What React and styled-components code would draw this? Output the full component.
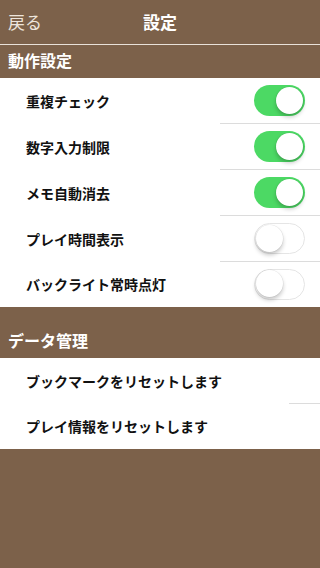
import styled, { createGlobalStyle } from "styled-components";

const GlobalStyle = createGlobalStyle`
  html, body {
    margin: 0;
    padding: 0;
    background: #7c614a;
  }

  body {
    font-family: "Noto Sans CJK JP", "Noto Sans", sans-serif;
  }
`;

const Page = styled.div`
  display: flex;
  flex-direction: column;
  width: 320px;
  min-height: 568px;
  background: #7c614a;
`;

const NavBar = styled.div`
  display: flex;
  align-items: center;
  justify-content: center;
  position: relative;
  height: 44px;
  border-bottom: 1.5px solid #e9e1d9;
`;

const BackButton = styled.div`
  position: absolute;
  top: 0;
  left: 8px;
  height: 42px;
  display: flex;
  align-items: center;
  color: #eee5dc;
  font-size: 17px;
`;

const Title = styled.div`
  margin-top: -2px;
  color: #ffffff;
  font-size: 17px;
  font-weight: bold;
`;

const SectionHeader = styled.div`
  display: flex;
  align-items: flex-end;
  height: ${({ height }) => height};
  padding: 0 8px 6px;
  box-sizing: border-box;
  color: #ffffff;
  font-size: 16px;
  font-weight: bold;
`;

const Group = styled.div`
  display: flex;
  flex-direction: column;
  background: #ffffff;
`;

const Row = styled.div`
  display: flex;
  align-items: center;
  justify-content: space-between;
  position: relative;
  height: ${({ last }) => (last ? "45px" : "46px")};
  padding: 0 15px 0 26px;
  box-sizing: border-box;

  &::after {
    content: "";
    display: ${({ last }) => (last ? "none" : "block")};
    position: absolute;
    left: ${({ inset }) => inset};
    right: 0;
    bottom: 0;
    height: 1px;
    background: #dcdcdc;
  }
`;

const Label = styled.div`
  color: #111111;
  font-size: 14px;
  font-weight: bold;
`;

const Track = styled.div`
  position: relative;
  width: 51px;
  height: 31px;
  border-radius: 16px;
  box-sizing: border-box;
  background: ${({ on }) => (on ? "#4cd964" : "#ffffff")};
  border: ${({ on }) => (on ? "none" : "1.5px solid #e5e5e5")};
`;

const Knob = styled.div`
  position: absolute;
  top: ${({ on }) => (on ? "2px" : "0.5px")};
  left: ${({ on }) => (on ? "22px" : "0.5px")};
  width: 27px;
  height: 27px;
  border-radius: 50%;
  background: #ffffff;
  box-shadow: 0 3px 4px rgba(0, 0, 0, 0.22), 0 0 0 0.5px rgba(0, 0, 0, 0.08);
`;

const Footer = styled.div`
  flex: 1;
`;

function Toggle({ on }) {
  return (
    <Track on={on}>
      <Knob on={on} />
    </Track>
  );
}

const behaviourSettings = [
  { label: "重複チェック", on: true },
  { label: "数字入力制限", on: true },
  { label: "メモ自動消去", on: true },
  { label: "プレイ時間表示", on: false },
  { label: "バックライト常時点灯", on: false },
];

const dataSettings = ["ブックマークをリセットします", "プレイ情報をリセットします"];

export default function App() {
  return (
    <Page>
      <GlobalStyle />
      <NavBar>
        <BackButton>戻る</BackButton>
        <Title>設定</Title>
      </NavBar>

      <SectionHeader height="32.5px">動作設定</SectionHeader>
      <Group>
        {behaviourSettings.map((item, i) => (
          <Row key={item.label} inset="220px" last={i === behaviourSettings.length - 1}>
            <Label>{item.label}</Label>
            <Toggle on={item.on} />
          </Row>
        ))}
      </Group>

      <SectionHeader height="51px">データ管理</SectionHeader>
      <Group>
        {dataSettings.map((label, i) => (
          <Row key={label} inset="289px" last={i === dataSettings.length - 1}>
            <Label>{label}</Label>
          </Row>
        ))}
      </Group>

      <Footer />
    </Page>
  );
}
